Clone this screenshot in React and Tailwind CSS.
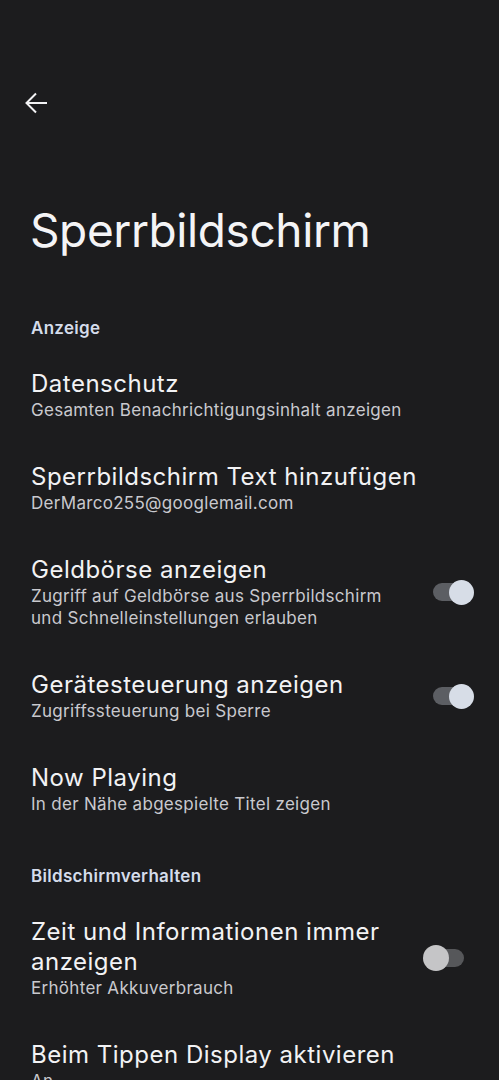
import React from "react";

const font = { fontFamily: "Inter, Roboto, 'Noto Sans', sans-serif" };

function Toggle({ on }) {
  if (on) {
    return (
      <div className="relative h-[25px] w-[41px] shrink-0">
        <div className="absolute left-0 top-[3.5px] h-[18px] w-[37px] rounded-full bg-[#5c5e63]" />
        <div className="absolute right-0 top-0 h-[25px] w-[25px] rounded-full bg-[#d7dde7]" />
      </div>
    );
  }
  return (
    <div className="relative h-[26px] w-[41px] shrink-0">
      <div className="absolute right-0 top-[4px] h-[18px] w-[36px] rounded-full bg-[#56575a]" />
      <div className="absolute left-0 top-0 h-[26px] w-[26px] rounded-full bg-[#c5c5c7]" />
    </div>
  );
}

function Header({ children }) {
  return (
    <div className="px-[31px] pt-[31px] pb-[10px] text-[17px] leading-[20px] tracking-[0.3px] font-semibold text-[#d5dceb]">
      {children}
    </div>
  );
}

function Item({ title, sub, toggle, toggleClass }) {
  return (
    <div className="flex items-center pl-[31px] pt-[21px] pb-[20px]">
      <div className="flex-1 min-w-0">
        <div className="text-[24px] leading-[30px] tracking-[0.5px] text-[#f2f2f4]">{title}</div>
        <div className="text-[17px] leading-[22px] tracking-[0.3px] text-[#c9c9ce]">{sub}</div>
      </div>
      {toggle !== undefined && (
        <div className={toggleClass}>
          <Toggle on={toggle} />
        </div>
      )}
    </div>
  );
}

export default function App() {
  return (
    <div className="h-[1080px] w-full overflow-hidden bg-[#1c1c1e]" style={font}>
      <div className="h-[92px]" />
      <div className="pl-[25px]">
        <svg width="22" height="22" viewBox="0 0 22 22" fill="none" stroke="#f2f2f4" strokeWidth="2" strokeLinecap="square">
          <path d="M21 11H2" />
          <path d="M11 1.5L1.5 11L11 20.5" strokeLinecap="butt" />
        </svg>
      </div>
      <div className="px-[30px] pt-[86px] text-[46px] leading-[60px] tracking-[-0.4px] text-[#f4f4f6]">
        Sperrbildschirm
      </div>
      <div className="h-[27px]" />
      <Header>Anzeige</Header>
      <Item title="Datenschutz" sub="Gesamten Benachrichtigungsinhalt anzeigen" />
      <Item title="Sperrbildschirm Text hinzufügen" sub="DerMarco255@googlemail.com" />
      <Item
        title="Geldbörse anzeigen"
        sub={<>Zugriff auf Geldbörse aus Sperrbildschirm<br />und Schnelleinstellungen erlauben</>}
        toggle={true}
        toggleClass="ml-[40px] mr-[25px]"
      />
      <Item
        title="Gerätesteuerung anzeigen"
        sub="Zugriffssteuerung bei Sperre"
        toggle={true}
        toggleClass="ml-[40px] mr-[25px]"
      />
      <Item title="Now Playing" sub="In der Nähe abgespielte Titel zeigen" />
      <Header>Bildschirmverhalten</Header>
      <Item
        title={<>Zeit und Informationen immer<br />anzeigen</>}
        sub="Erhöhter Akkuverbrauch"
        toggle={false}
        toggleClass="ml-[40px] mr-[35px]"
      />
      <Item title="Beim Tippen Display aktivieren" sub="An" />
    </div>
  );
}
